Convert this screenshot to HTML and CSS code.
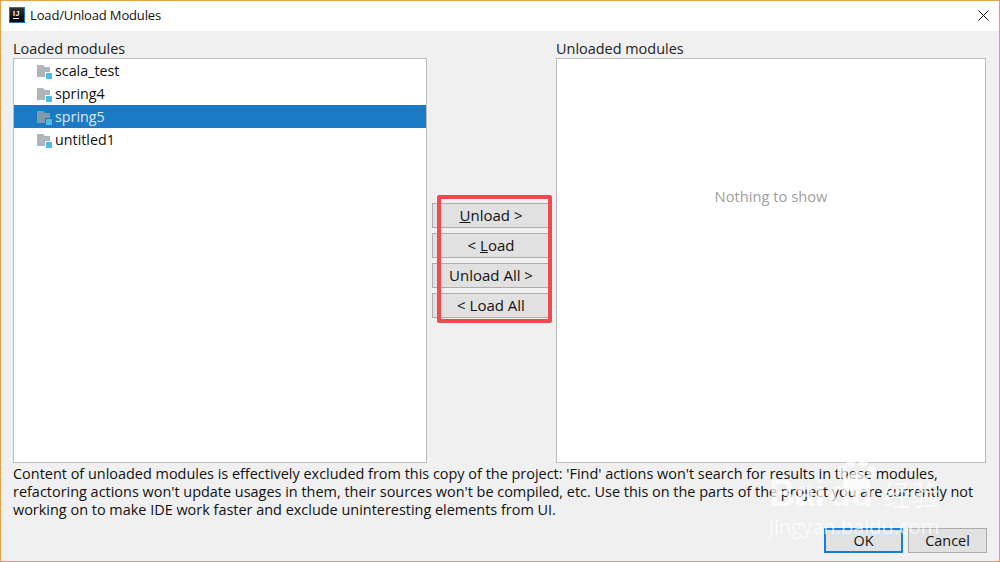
FILE: index.html
```html
<!DOCTYPE html>
<html>
    <head>
        <meta charset="utf-8" />
        <title>Load/Unload Modules</title>
        <link rel="stylesheet" href="styles.css">
    </head>

    <body>
        <div class="window">
            <div class="titlebar">
                <span class="app-icon"><span class="app-letters">IJ</span><span class="app-line"></span></span>
                <span class="title">Load/Unload Modules</span>
                <svg class="close" width="11" height="11" viewBox="0 0 11 11">
                    <path d="M0.5 0.5L10.5 10.5M10.5 0.5L0.5 10.5" stroke="#111" stroke-width="1" fill="none" />
                </svg>
            </div>

            <div class="content">
                <div class="panes">
                    <div class="pane pane-left">
                        <div class="pane-label">Loaded modules</div>
                        <ul class="modules">
                            <li>
                                <svg class="folder" width="15" height="14" viewBox="0 0 15 14">
                                    <path d="M0 0H6L8 2H13V12H0Z" fill="#aeb5bb" />
                                    <rect x="8" y="7" width="7" height="7" fill="#fff" />
                                    <rect x="9" y="8" width="6" height="6" fill="#4fbce6" />
                                </svg>
                                scala_test
                            </li>
                            <li>
                                <svg class="folder" width="15" height="14" viewBox="0 0 15 14">
                                    <path d="M0 0H6L8 2H13V12H0Z" fill="#aeb5bb" />
                                    <rect x="8" y="7" width="7" height="7" fill="#fff" />
                                    <rect x="9" y="8" width="6" height="6" fill="#4fbce6" />
                                </svg>
                                spring4
                            </li>
                            <li class="selected">
                                <svg class="folder" width="15" height="14" viewBox="0 0 15 14">
                                    <path d="M0 0H6L8 2H13V12H0Z" fill="#8199ad" />
                                    <rect x="8" y="7" width="7" height="7" fill="#1a7ac4" />
                                    <rect x="9" y="8" width="6" height="6" fill="#4fbce6" />
                                </svg>
                                spring5
                            </li>
                            <li>
                                <svg class="folder" width="15" height="14" viewBox="0 0 15 14">
                                    <path d="M0 0H6L8 2H13V12H0Z" fill="#aeb5bb" />
                                    <rect x="8" y="7" width="7" height="7" fill="#fff" />
                                    <rect x="9" y="8" width="6" height="6" fill="#4fbce6" />
                                </svg>
                                untitled1
                            </li>
                        </ul>
                    </div>

                    <div class="actions">
                        <button class="btn"><u>U</u>nload &gt;</button>
                        <button class="btn">&lt; <u>L</u>oad</button>
                        <button class="btn">Unload All &gt;</button>
                        <button class="btn">&lt; Load All</button>
                    </div>

                    <div class="pane pane-right">
                        <div class="pane-label">Unloaded modules</div>
                        <div class="empty">Nothing to show</div>
                    </div>
                </div>

                <p class="note">Content of unloaded modules is effectively excluded from this copy of the project: 'Find' actions won't search for results in these modules,<br>refactoring actions won't update usages in them, their sources won't be compiled, etc. Use this on the parts of the project you are currently not<br>working on to make IDE work faster and exclude uninteresting elements from UI.</p>

                <div class="footer">
                    <button class="btn btn-footer btn-default">OK</button>
                    <button class="btn btn-footer">Cancel</button>
                </div>
            </div>

            <!-- red marker drawn over the screenshot -->
            <div class="marker"></div>

            <!-- watermark -->
            <div class="watermark">
                <svg class="paw" width="44" height="38" viewBox="0 0 64 56">
                    <ellipse cx="10" cy="25" rx="7" ry="9" />
                    <ellipse cx="23" cy="9" rx="7" ry="9" />
                    <ellipse cx="41" cy="9" rx="7" ry="9" />
                    <ellipse cx="54" cy="25" rx="7" ry="9" />
                    <path d="M32 24C42 24 52 36 52 45C52 55 41 55 32 51C23 55 12 55 12 45C12 36 22 24 32 24Z" />
                </svg>
                <div class="wm-brand"><span>Bai</span><span class="wm-du">du</span><span class="wm-cn">经验</span></div>
                <div class="wm-url">jingyan.baidu.com</div>
            </div>
        </div>
    </body>
</html>
```

FILE: styles.css
```css
* {
    box-sizing: border-box;
}

html,
body {
    height: 100%;
}

body {
    margin: 0;
    font-family: "Open Sans", "Noto Sans", sans-serif;
    font-size: 14.45px;
    color: #111;
}

.window {
    position: relative;
    width: 1000px;
    height: 562px;
    display: flex;
    flex-direction: column;
    overflow: hidden;
    border: 1px solid #e0a24c;
    background: #f0f0f0;
}

.titlebar {
    height: 30px;
    flex: none;
    display: flex;
    align-items: center;
    padding: 0 10px 2px 8px;
    background: #fff;
}

.app-icon {
    width: 16px;
    height: 16px;
    margin-right: 5px;
    padding: 2px 3px;
    display: block;
    background: linear-gradient(#333, #000);
    border: 1px solid #1b75c9;
    color: #fff;
    font-family: "Liberation Sans", sans-serif;
    font-size: 7px;
    font-weight: 700;
    line-height: 7px;
}

.app-letters {
    display: block;
    letter-spacing: 0.5px;
}

.app-line {
    display: block;
    width: 6px;
    height: 1px;
    margin-top: 1px;
    background: #fff;
}

.title {
    flex: 1;
    font-size: 13px;
    letter-spacing: -0.15px;
}

.close {
    display: block;
}

.content {
    flex: 1;
    display: flex;
    flex-direction: column;
    padding: 8px 12px 8px 12px;
}

.panes {
    display: flex;
    height: 424px;
    flex: none;
}

.pane {
    display: flex;
    flex-direction: column;
}

.pane-left {
    width: 414px;
}

.pane-right {
    width: 430px;
    margin-left: 6px;
}

.pane-label {
    height: 19px;
    line-height: 20px;
    color: #222;
}

.modules {
    flex: 1;
    margin: 0;
    padding: 0;
    list-style: none;
    background: #fff;
    border: 1px solid #bdbdbd;
    font-size: 14.3px;
}

.modules li {
    height: 23px;
    padding-left: 23px;
    display: flex;
    align-items: center;
    gap: 3px;
}

.modules li.selected {
    background: #1a7ac4;
    color: #dfe9f2;
}

.folder {
    display: block;
    flex: none;
    margin-top: 3px;
}

.empty {
    flex: 1;
    padding-top: 127px;
    text-align: center;
    background: #fff;
    border: 1px solid #bdbdbd;
    color: #a0a0a0;
    font-size: 14.7px;
}

.actions {
    width: 118px;
    margin: 164px 0 0 5px;
    display: flex;
    flex-direction: column;
    gap: 5px;
    font-size: 15px;
}

.btn {
    height: 25px;
    padding: 0 0 2px;
    font: inherit;
    color: #111;
    background: #e1e1e1;
    border: 1px solid #adadad;
}

.note {
    margin: 2px 0 0;
    line-height: 18px;
    white-space: nowrap;
    color: #111;
}

.footer {
    margin-top: auto;
    display: flex;
    justify-content: flex-end;
    gap: 5px;
}

.btn-footer {
    width: 79px;
    padding: 0;
}

.btn-default {
    border: 2px solid #0f7fe0;
}

.marker {
    position: absolute;
    left: 436px;
    top: 194px;
    width: 115px;
    height: 128px;
    border: 4px solid #ef4a50;
    border-radius: 2px;
}

.watermark {
    position: absolute;
    left: 768px;
    top: 474px;
    width: 182px;
    color: rgba(255, 255, 255, 0.7);
    pointer-events: none;
}

.paw {
    position: absolute;
    left: 66px;
    top: -20px;
    fill: rgba(255, 255, 255, 0.7);
}

.wm-brand {
    display: flex;
    align-items: center;
    white-space: nowrap;
    font-family: "Liberation Sans", sans-serif;
    font-weight: 700;
    font-size: 36px;
    line-height: 38px;
}

.wm-du {
    margin-left: 4px;
}

.wm-cn {
    margin-left: 10px;
    font-family: "Noto Sans CJK SC", sans-serif;
    font-size: 28px;
    font-weight: 400;
}

.wm-url {
    margin-top: 2px;
    font-size: 20px;
    line-height: 24px;
    white-space: nowrap;
}
```
